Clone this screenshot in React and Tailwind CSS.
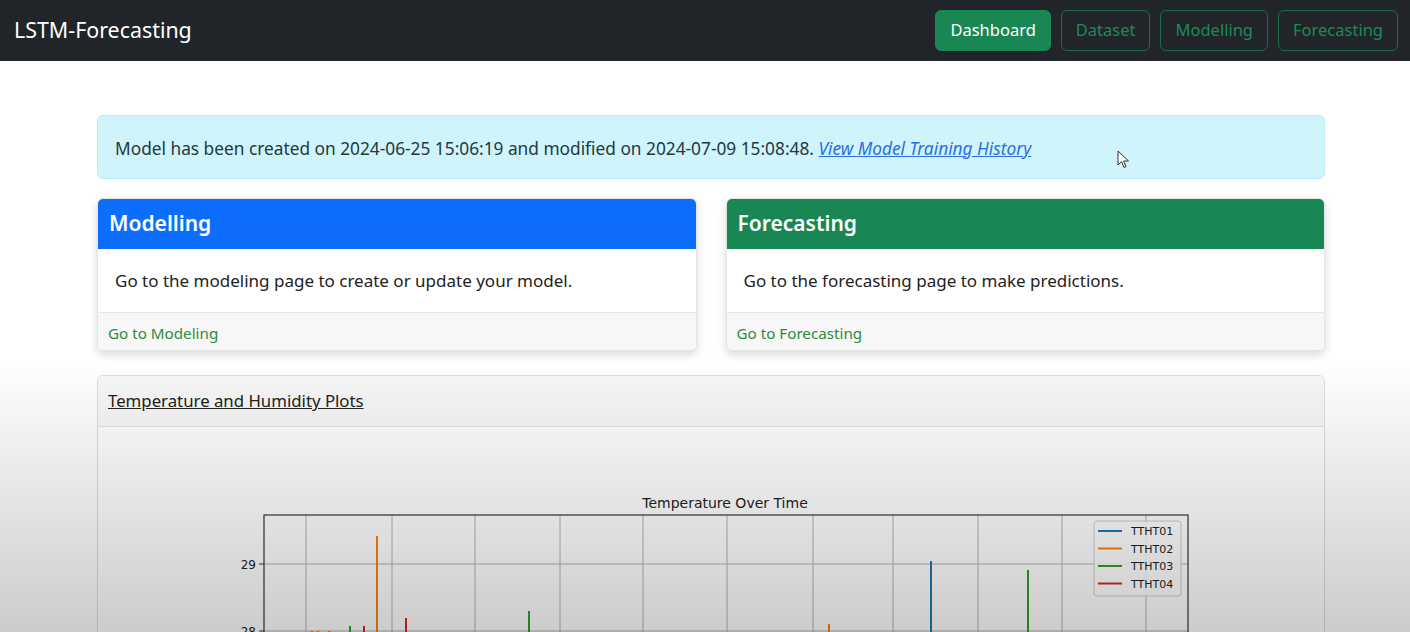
import React from 'react';

const navItems = ['Dashboard', 'Dataset', 'Modelling', 'Forecasting'];

const gridX = [306, 392, 475, 560, 643, 727, 813, 893, 978, 1062, 1146];

// spikes of the temperature plot (x, top y)
const spikes = [
  { x: 377, y: 535, c: '#ff7f0e' },
  { x: 350, y: 625, c: '#2ca02c' },
  { x: 364, y: 625, c: '#d62728' },
  { x: 406, y: 617, c: '#d62728' },
  { x: 529, y: 610, c: '#2ca02c' },
  { x: 829, y: 623, c: '#ff7f0e' },
  { x: 931, y: 560, c: '#1f77b4' },
  { x: 1028, y: 569, c: '#2ca02c' },
];

const legend = [
  { label: 'TTHT01', c: '#1f77b4' },
  { label: 'TTHT02', c: '#ff7f0e' },
  { label: 'TTHT03', c: '#2ca02c' },
  { label: 'TTHT04', c: '#d62728' },
];

const TemperatureChart = () => {
  // chart coords are in page px; the svg starts at x=98, y=426
  const ox = 98;
  const oy = 426;
  return (
    <svg width="1226" height="420" className="block" style={{ fontFamily: '"DejaVu Sans", sans-serif' }}>
      <g transform={`translate(${-ox}, ${-oy})`}>
        <text x="725" y="507" textAnchor="middle" fontSize="14" fill="#222">Temperature Over Time</text>
        <rect x="264" y="514" width="924" height="300" fill="white" />
        {gridX.map((x) => (
          <line key={x} x1={x} y1="514" x2={x} y2="814" stroke="#b0b0b0" strokeWidth="1" />
        ))}
        <line x1="264" y1="563" x2="1188" y2="563" stroke="#b0b0b0" strokeWidth="1" />
        <line x1="264" y1="630" x2="1188" y2="630" stroke="#b0b0b0" strokeWidth="1" />
        <line x1="259" y1="563" x2="264" y2="563" stroke="#333" />
        <line x1="259" y1="630" x2="264" y2="630" stroke="#333" />
        <text x="256" y="568" textAnchor="end" fontSize="12" fill="#222">29</text>
        <text x="256" y="635" textAnchor="end" fontSize="12" fill="#222">28</text>
        {spikes.map((s, i) => (
          <line key={i} x1={s.x} y1={s.y} x2={s.x} y2="814" stroke={s.c} strokeWidth="2" />
        ))}
        <circle cx="312" cy="631" r="1.5" fill="#ff7f0e" />
        <circle cx="318" cy="631" r="1.5" fill="#ff7f0e" />
        <circle cx="329" cy="631" r="1.5" fill="#ff7f0e" />
        <rect x="264" y="514" width="924" height="300" fill="none" stroke="#333" strokeWidth="1.2" />
        <rect x="1094" y="520" width="87" height="75" rx="3" fill="white" fillOpacity="0.85" stroke="#ccc" />
        {legend.map((l, i) => (
          <g key={l.label}>
            <line x1="1098" y1={530 + i * 17.5} x2="1122" y2={530 + i * 17.5} stroke={l.c} strokeWidth="2" />
            <text x="1131" y={534 + i * 17.5} fontSize="11" fill="#222">{l.label}</text>
          </g>
        ))}
      </g>
    </svg>
  );
};

const InfoCard = ({ title, text, link, headerClass }) => (
  <div className="flex flex-col rounded-md overflow-hidden bg-white border border-[#e3e3e3] shadow-[0_4px_10px_rgba(0,0,0,0.15)]">
    <div className={`${headerClass} h-[50px] flex items-center px-[11px]`}>
      <h5 className="text-white text-[21px] font-semibold">{title}</h5>
    </div>
    <div className="h-[63px] flex items-center px-[17px] text-[17px] text-[#222]">{text}</div>
    <div className="h-[38px] flex items-center px-[10px] pt-[3px] bg-[#f7f7f7] border-t border-[#e6e6e6] text-[15.2px] text-[#2e8b3e]">
      {link}
    </div>
  </div>
);

const App = () => {
  return (
    <div className="relative min-h-screen bg-white overflow-hidden" style={{ fontFamily: '"Noto Sans", "Open Sans", sans-serif' }}>
      <nav className="h-[61px] bg-[#212529] flex items-center justify-between pl-[14px] pr-[12px]">
        <span className="text-[21.4px] text-white">LSTM-Forecasting</span>
        <div className="flex gap-[10px]">
          {navItems.map((item, i) => (
            <button
              key={item}
              className={`h-[41px] px-[14px] rounded-md text-[16.5px] border ${
                i === 0 ? 'bg-[#198754] border-[#198754] text-white' : 'border-[#1f6b45] text-[#1e8a55]'
              }`}
            >
              {item}
            </button>
          ))}
        </div>
      </nav>

      <div className="ml-[97px] w-[1228px] pt-[54px]">
        <div className="h-[64px] flex items-center px-[17px] pt-[3px] rounded-md bg-[#cff4fc] border border-[#b6effb] text-[17.3px] text-[#22393f]">
          <span>
            Model has been created on 2024-06-25 15:06:19 and modified on 2024-07-09 15:08:48.{' '}
            <a className="italic underline text-[#2a6fe0]">View Model Training History</a>
          </span>
        </div>

        <div className="grid grid-cols-2 gap-[29px] mt-[19px]">
          <InfoCard
            title="Modelling"
            text="Go to the modeling page to create or update your model."
            link="Go to Modeling"
            headerClass="bg-[#0d6efd]"
          />
          <InfoCard
            title="Forecasting"
            text="Go to the forecasting page to make predictions."
            link="Go to Forecasting"
            headerClass="bg-[#198754]"
          />
        </div>

        <div className="mt-[24px] rounded-md border border-[#dcdcdc] bg-white overflow-hidden">
          <div className="h-[51px] flex items-center px-[10px] bg-[#f7f7f7] border-b border-[#e3e3e3]">
            <span className="underline text-[16.8px] text-[#222]">Temperature and Humidity Plots</span>
          </div>
          <TemperatureChart />
        </div>
      </div>

      {/* video fade at the bottom */}
      <div className="pointer-events-none absolute left-0 right-0 top-[360px] h-[272px] bg-gradient-to-b from-transparent to-black/20" />

      {/* mouse cursor */}
      <svg className="pointer-events-none absolute left-[1117px] top-[150px]" width="14" height="20" viewBox="0 0 14 20">
        <path d="M1 1 L1 15 L4.5 11.5 L7 17.5 L9 16.6 L6.6 11 L11.5 11 Z" fill="white" stroke="#333" strokeWidth="1" strokeLinejoin="round" />
      </svg>
    </div>
  );
};

export default App;
